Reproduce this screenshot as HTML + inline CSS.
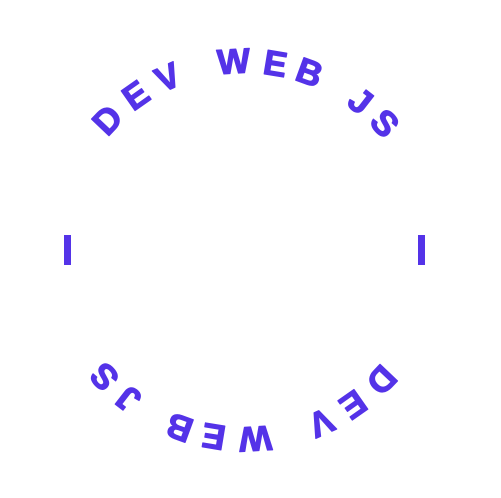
<!DOCTYPE html>
<html><head><style>html,body{margin:0;padding:0;background:#fff;width:501px;height:498px;overflow:hidden}</style></head>
<body>
<svg width="501" height="498" viewBox="0 0 501 498" xmlns="http://www.w3.org/2000/svg">
<defs>
<g id="half" fill="#5433e8" stroke="#5433e8" stroke-width="1.2" stroke-linejoin="round" font-family="Liberation Sans, sans-serif" font-weight="bold" font-size="35" text-anchor="middle">
<text x="244.5" y="73" transform="rotate(-46.5 244.5 250)">D</text>
<text x="244.5" y="73" transform="rotate(-35.1 244.5 250)">E</text>
<text x="244.5" y="73" transform="rotate(-24 244.5 250)">V</text>
<text x="244.5" y="73" transform="rotate(-3.3 244.5 250)">W</text>
<text x="244.5" y="73" transform="rotate(9.4 244.5 250)">E</text>
<text x="244.5" y="73" transform="rotate(20.1 244.5 250)">B</text>
<text x="244.5" y="73" transform="rotate(37.9 244.5 250)">J</text>
<text x="244.5" y="73" transform="rotate(47.9 244.5 250)">S</text>
<rect x="64" y="235" width="7" height="30" stroke="none"/>
</g>
</defs>
<use href="#half"/>
<use href="#half" transform="rotate(180 244.5 250)"/>
</svg>
</body></html>
